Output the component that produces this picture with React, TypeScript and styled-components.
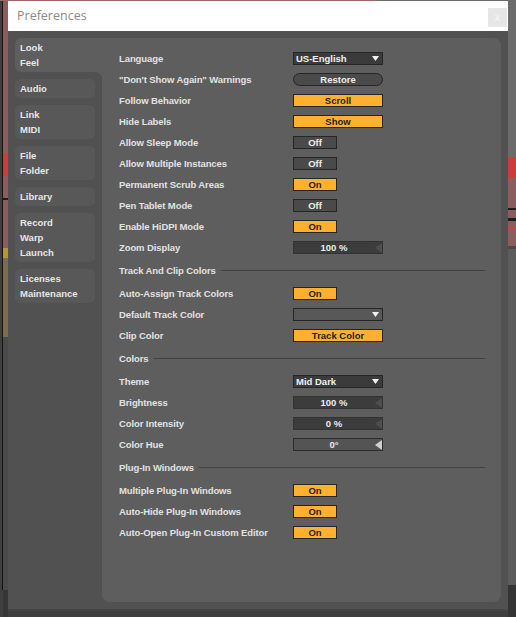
import React from 'react';
import styled, { createGlobalStyle, css } from 'styled-components';

const GlobalStyle = createGlobalStyle`
  html, body {
    margin: 0;
    padding: 0;
  }
  body {
    background: #3a3a3a;
    font-family: "Liberation Sans", Arial, sans-serif;
  }
`;

const ORANGE = '#ffb02f';
const PANEL = '#5e5e5e';

type RowDef = { label: string; control: React.ReactNode };
type SectionDef = { title?: string; rows: RowDef[] };

export default function App() {
  const sections: SectionDef[] = [
    {
      rows: [
        { label: 'Language', control: <Chooser value="US-English" /> },
        { label: '"Don\'t Show Again" Warnings', control: <PillButton>Restore</PillButton> },
        { label: 'Follow Behavior', control: <WideButton>Scroll</WideButton> },
        { label: 'Hide Labels', control: <WideButton>Show</WideButton> },
        { label: 'Allow Sleep Mode', control: <Toggle $on={false}>Off</Toggle> },
        { label: 'Allow Multiple Instances', control: <Toggle $on={false}>Off</Toggle> },
        { label: 'Permanent Scrub Areas', control: <Toggle $on>On</Toggle> },
        { label: 'Pen Tablet Mode', control: <Toggle $on={false}>Off</Toggle> },
        { label: 'Enable HiDPI Mode', control: <Toggle $on>On</Toggle> },
        { label: 'Zoom Display', control: <Slider value="100 %" /> },
      ],
    },
    {
      title: 'Track And Clip Colors',
      rows: [
        { label: 'Auto-Assign Track Colors', control: <Toggle $on>On</Toggle> },
        { label: 'Default Track Color', control: <Chooser value="" muted /> },
        { label: 'Clip Color', control: <WideButton>Track Color</WideButton> },
      ],
    },
    {
      title: 'Colors',
      rows: [
        { label: 'Theme', control: <Chooser value="Mid Dark" /> },
        { label: 'Brightness', control: <Slider value="100 %" /> },
        { label: 'Color Intensity', control: <Slider value="0 %" /> },
        { label: 'Color Hue', control: <Slider value="0°" light /> },
      ],
    },
    {
      title: 'Plug-In Windows',
      rows: [
        { label: 'Multiple Plug-In Windows', control: <Toggle $on>On</Toggle> },
        { label: 'Auto-Hide Plug-In Windows', control: <Toggle $on>On</Toggle> },
        { label: 'Auto-Open Plug-In Custom Editor', control: <Toggle $on>On</Toggle> },
      ],
    },
  ];

  const tabs = [
    ['Look', 'Feel'],
    ['Audio'],
    ['Link', 'MIDI'],
    ['File', 'Folder'],
    ['Library'],
    ['Record', 'Warp', 'Launch'],
    ['Licenses', 'Maintenance'],
  ];

  return (
    <>
      <GlobalStyle />
      <Backdrop>
        <Window>
          <TitleBar>
            <Title>Preferences</Title>
            <CloseButton>x</CloseButton>
          </TitleBar>
          <Body>
            <Sidebar>
              {tabs.map((lines, i) => (
                <Tab key={lines[0]} $active={i === 0}>
                  {lines.map((l) => (
                    <div key={l}>{l}</div>
                  ))}
                </Tab>
              ))}
            </Sidebar>
            <Panel>
              {sections.map((s, i) => (
                <React.Fragment key={i}>
                  {s.title && (
                    <SectionHeader>
                      <span>{s.title}</span>
                      <Rule />
                    </SectionHeader>
                  )}
                  {s.rows.map((r) => (
                    <Row key={r.label}>
                      <Label>{r.label}</Label>
                      {r.control}
                    </Row>
                  ))}
                </React.Fragment>
              ))}
            </Panel>
          </Body>
        </Window>
      </Backdrop>
    </>
  );
}

function Chooser({ value, muted }: { value: string; muted?: boolean }) {
  return (
    <Dropdown $muted={muted}>
      <span>{value}</span>
      <svg width="7" height="5" viewBox="0 0 7 5">
        <polygon points="0,0 7,0 3.5,5" fill="#f2f2f2" />
      </svg>
    </Dropdown>
  );
}

function Slider({ value, light }: { value: string; light?: boolean }) {
  return (
    <SliderBox $light={light}>
      <span>{value}</span>
      <Arrow width="7" height="10" viewBox="0 0 7 10">
        <polygon points="7,0 7,10 0,5" fill={light ? '#d0d0d0' : '#4e4e4e'} />
      </Arrow>
    </SliderBox>
  );
}

const Backdrop = styled.div`
  width: 516px;
  height: 617px;
  box-sizing: border-box;
  padding: 1px 8px 8px 8px;
  background:
    linear-gradient(to right, #9a6868 0 377px, #6b6b6b 377px) 0 0 / 100% 1px no-repeat,
    linear-gradient(#151515, #151515) 2px 0 / 1px 590px no-repeat,
    linear-gradient(
        to bottom,
        #8b5d5e 0 153px,
        #cf3b3b 153px 176px,
        #8b5d5e 176px 198px,
        #1c1c1c 198px 200px,
        #8b5d5e 200px 248px,
        #b8952f 248px 258px,
        #7d6c4b 258px 337px,
        #4b4b4b 337px 590px,
        #353535 590px
      )
      3px 0 / 5px 100% no-repeat,
    linear-gradient(
        to bottom,
        #6b6b6b 0 157px,
        #cf3b3b 157px 178px,
        #8b5d5e 178px 208px,
        #1e1e1e 208px 210px,
        #8b5d5e 210px 218px,
        #1e1e1e 218px 221px,
        #8b5d5e 221px 227px,
        #d04040 227px 229px,
        #8b5d5e 229px 246px,
        #4a4a4a 246px 249px,
        #5c5c5c 249px 585px,
        #343434 585px
      )
      right 0 / 8px 100% no-repeat,
    #3f3f3f;
`;

const Window = styled.div`
  height: 608px;
  display: flex;
  flex-direction: column;
  background: #515151;
  box-shadow: 0 2px 0 #464646;
`;

const TitleBar = styled.div`
  height: 30px;
  flex-shrink: 0;
  background: #ffffff;
  display: flex;
  align-items: center;
  justify-content: space-between;
  padding: 0 1px 0 9px;
`;

const Title = styled.span`
  font-family: "Open Sans", "Noto Sans", sans-serif;
  font-size: 12.5px;
  color: #8a8a8a;
  margin-top: -1px;
`;

const CloseButton = styled.div`
  width: 19px;
  height: 19px;
  margin-top: 2px;
  background: #e6e6e6;
  color: #f7f7f7;
  font-family: "DejaVu Sans", sans-serif;
  font-size: 10px;
  display: flex;
  align-items: center;
  justify-content: center;
`;

const Body = styled.div`
  flex: 1;
  min-height: 0;
  display: flex;
  padding: 7px;
`;

const Sidebar = styled.nav`
  width: 87px;
  flex-shrink: 0;
  display: flex;
  flex-direction: column;
  gap: 7px;
`;

const Tab = styled.div<{ $active?: boolean }>`
  position: relative;
  box-sizing: border-box;
  width: ${(p) => (p.$active ? '87px' : '80px')};
  padding: 2px 5px;
  font-size: 9.5px;
  font-weight: 700;
  line-height: 15px;
  color: #e6e6e6;
  background: ${(p) => (p.$active ? PANEL : '#585858')};
  border-radius: ${(p) => (p.$active ? '6px 0 0 6px' : '5px')};

  ${(p) =>
    p.$active &&
    css`
      &::after {
        content: '';
        position: absolute;
        right: 0;
        bottom: -6px;
        width: 6px;
        height: 6px;
        background: radial-gradient(circle at 0 100%, transparent 5.5px, ${PANEL} 6px);
      }
    `}
`;

const Panel = styled.main`
  flex: 1;
  background: ${PANEL};
  border-radius: 0 8px 8px 8px;
  padding: 10px 16px 0 17px;
`;

const Row = styled.div`
  height: 21px;
  display: flex;
  align-items: center;
`;

const Label = styled.div`
  width: 174px;
  flex-shrink: 0;
  font-size: 9.5px;
  font-weight: 700;
  letter-spacing: -0.1px;
  color: #e2e2e2;
  white-space: nowrap;
`;

const SectionHeader = styled.div`
  height: 25px;
  padding-bottom: 1px;
  box-sizing: border-box;
  display: flex;
  align-items: center;
  gap: 5px;
  font-size: 9.5px;
  font-weight: 700;
  letter-spacing: -0.1px;
  color: #e2e2e2;
  white-space: nowrap;
`;

const Rule = styled.div`
  flex: 1;
  height: 1px;
  background: #424242;
`;

const controlBase = css`
  box-sizing: border-box;
  height: 13px;
  border: 1px solid #262626;
  font-size: 9.5px;
  font-weight: 700;
  line-height: 11px;
  white-space: nowrap;
`;

const Toggle = styled.div<{ $on: boolean }>`
  ${controlBase};
  width: 44px;
  text-align: center;
  background: ${(p) => (p.$on ? ORANGE : '#4a4a4a')};
  color: ${(p) => (p.$on ? '#1e1e1e' : '#ececec')};
`;

const WideButton = styled.div`
  ${controlBase};
  width: 90px;
  text-align: center;
  background: ${ORANGE};
  color: #1e1e1e;
`;

const PillButton = styled.div`
  ${controlBase};
  width: 90px;
  text-align: center;
  border-radius: 7px;
  background: #4a4a4a;
  color: #ececec;
`;

const Dropdown = styled.div<{ $muted?: boolean }>`
  ${controlBase};
  width: 90px;
  display: flex;
  align-items: center;
  justify-content: space-between;
  padding: 0 3px 0 2px;
  background: ${(p) => (p.$muted ? '#585858' : '#3b3b3b')};
  color: #f0f0f0;
`;

const SliderBox = styled.div<{ $light?: boolean }>`
  ${controlBase};
  position: relative;
  width: 90px;
  padding-right: 8px;
  text-align: center;
  background: ${(p) => (p.$light ? '#545454' : '#3c3c3c')};
  border-color: ${(p) => (p.$light ? '#2c2c2c' : '#333333')};
  color: #ececec;
`;

const Arrow = styled.svg`
  position: absolute;
  right: 0;
  top: 0.5px;
`;
